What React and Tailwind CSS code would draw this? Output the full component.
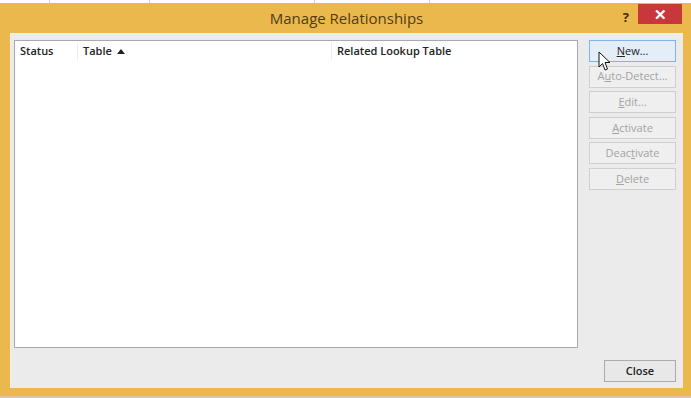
import React from "react";

const font = { fontFamily: '"Open Sans", "Noto Sans", sans-serif' };

function Btn({ pre, u, post, active }) {
  return (
    <button
      className={
        active
          ? "h-[22px] w-[87px] border border-[#7eb4ea] bg-[#e3eef9] text-[11px] text-[#222]"
          : "h-[22px] w-[87px] border border-[#cfcfcf] bg-[#efefef] text-[11px] text-[#a3a3a3]"
      }
    >
      {pre}
      <span className="underline">{u}</span>
      {post}
    </button>
  );
}

export default function App() {
  return (
    <div className="relative flex h-[398px] w-[691px] flex-col bg-[#d8c6a0]" style={font}>
      <div className="flex h-[3px] bg-white">
        <div className="w-[50px] border-r border-[#d0d0d0]" />
        <div className="w-[100px] border-r border-[#d0d0d0]" />
        <div className="w-[165px] border-r border-[#d0d0d0]" />
        <div className="w-[115px] border-r border-[#d0d0d0]" />
      </div>
      <div className="flex flex-col bg-[#ebb84e] pl-[10px] pr-[8px] pb-[8px]">
        <div className="relative flex h-[30px] items-center justify-center">
          <span className="text-[15px] text-[#4f3d12]">Manage Relationships</span>
          <div className="absolute top-[1px] right-[1px] flex items-start">
            <span className="mt-[4px] mr-[9px] text-[13px] font-bold text-[#3b2d0c]">?</span>
            <div className="flex h-[20px] w-[44px] items-center justify-center bg-[#c8373c] text-[15px] font-bold text-white">
              ✕
            </div>
          </div>
        </div>
        <div className="flex h-[355px] border-t border-l border-[#f7efe6] bg-[#ebebeb] pt-[6px] pl-[3px]">
          <div className="flex h-[308px] w-[564px] flex-col border border-[#a9a9a9] bg-white">
            <div className="flex h-[21px] items-center text-[11px] font-semibold text-[#222]">
              <div className="w-[63px] border-r border-[#ececec] pl-[5px]">Status</div>
              <div className="flex w-[254px] items-center gap-[5px] border-r border-[#ececec] pl-[5px]">
                Table
                <svg width="8" height="5" viewBox="0 0 8 5">
                  <path d="M0 5 L4 0 L8 5 Z" fill="#222" />
                </svg>
              </div>
              <div className="pl-[5px]">Related Lookup Table</div>
            </div>
          </div>
          <div className="ml-[11px] flex w-[87px] flex-col justify-between pb-[6px]">
            <div className="flex flex-col gap-[3.6px]">
              <Btn active pre="" u="N" post="ew..." />
              <Btn pre="A" u="u" post="to-Detect..." />
              <Btn pre="" u="E" post="dit..." />
              <Btn pre="" u="A" post="ctivate" />
              <Btn pre="Deac" u="t" post="ivate" />
              <Btn pre="" u="D" post="elete" />
            </div>
            <button className="ml-[15px] h-[22px] w-[72px] border border-[#acacac] bg-[#e8e8e8] text-[11px] font-semibold text-[#222]">
              Close
            </button>
          </div>
        </div>
      </div>
      <svg className="absolute top-[51px] left-[598px]" width="14" height="21" viewBox="0 0 14 21">
        <path d="M1 1 L1 16 L4.5 12.5 L7 19 L9.5 18 L7 11.5 L12 11.5 Z" fill="white" stroke="#111" strokeWidth="1" />
      </svg>
    </div>
  );
}
